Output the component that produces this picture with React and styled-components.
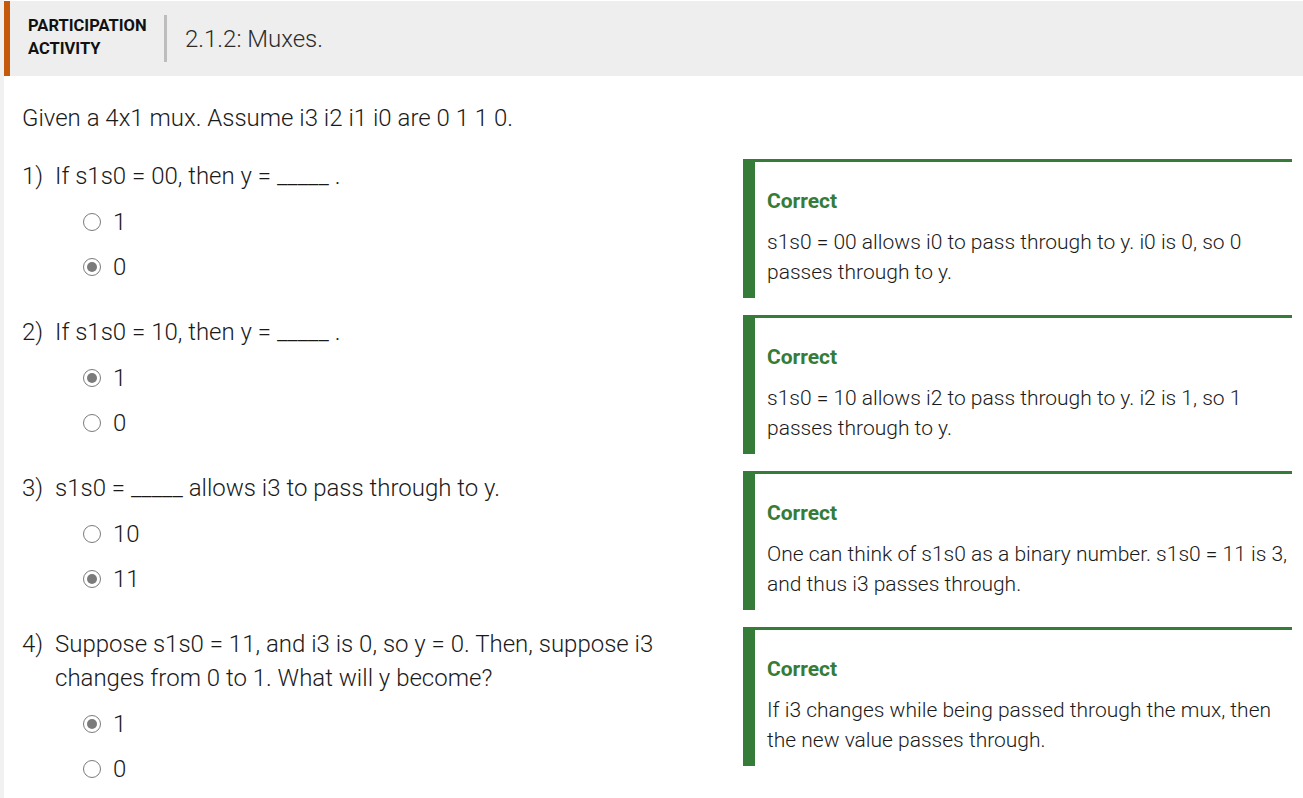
import React from "react";
import styled, { createGlobalStyle } from "styled-components";

const GlobalStyle = createGlobalStyle`
  body {
    margin: 0;
    background: #ffffff;
    font-family: Roboto, "Liberation Sans", sans-serif;
    color: #1a1a1a;
  }
`;

const Page = styled.div`
  border-left: 4px solid #f1f1f1;
  min-height: 798px;
  box-sizing: border-box;
  padding-top: 1px;
`;

const Header = styled.header`
  display: flex;
  align-items: center;
  height: 75px;
  background: #eeeeee;
  border-left: 6px solid #c55a0c;
`;

const ActivityLabel = styled.div`
  width: 136px;
  padding: 0 0 4px 18px;
  font-size: 16.5px;
  font-weight: 700;
  line-height: 23px;
  color: #111;
`;

const Divider = styled.div`
  width: 3px;
  height: 47px;
  background: #bdbdbd;
  margin-right: 18px;
`;

const Title = styled.h1`
  margin: 0;
  font-size: 24px;
  font-weight: 300;
  color: #2b2b2b;
  padding-top: 1px;
`;

const Body = styled.div`
  padding: 25px 11px 0 18px;
`;

const Intro = styled.p`
  margin: 0 0 24px;
  font-size: 24px;
  font-weight: 300;
  line-height: 34px;
`;

const QuestionRow = styled.div`
  display: flex;
  align-items: flex-start;
  margin-bottom: 17px;
`;

const QuestionSide = styled.div`
  flex: 1;
  display: flex;
  align-items: flex-start;
`;

const Number = styled.span`
  width: 33px;
  flex-shrink: 0;
  font-size: 24px;
  font-weight: 300;
  line-height: 34px;
`;

const QuestionBody = styled.div`
  flex: 1;
`;

const Prompt = styled.div`
  font-size: 24px;
  font-weight: 300;
  line-height: 34px;
  max-width: 630px;
`;

const Options = styled.div`
  padding: 6px 0 0 28px;
`;

const Option = styled.label`
  display: flex;
  align-items: center;
  height: 45px;
  font-size: 24px;
  font-weight: 300;
`;

const Radio = styled.span`
  width: 18px;
  height: 18px;
  box-sizing: border-box;
  border-radius: 50%;
  border: 1.5px solid #7b7b7b;
  margin-right: 12px;
  display: flex;
  align-items: center;
  justify-content: center;
  &::after {
    content: "";
    width: 10px;
    height: 10px;
    border-radius: 50%;
    background: ${(props) => (props.checked ? "#7b7b7b" : "transparent")};
  }
`;

const Feedback = styled.div`
  width: 549px;
  height: 139px;
  flex-shrink: 0;
  box-sizing: border-box;
  border-left: 12px solid #367c39;
  border-top: 3px solid #367c39;
  padding: 24px 0 0 12px;
`;

const FeedbackTitle = styled.div`
  font-size: 21px;
  font-weight: 700;
  line-height: 30px;
  color: #367c39;
  margin-bottom: 11px;
`;

const FeedbackText = styled.div`
  font-size: 21px;
  font-weight: 300;
  line-height: 30px;
`;

const questions = [
  {
    prompt: "If s1s0 = 00, then y = _____ .",
    options: [
      { label: "1", checked: false },
      { label: "0", checked: true },
    ],
    feedback: "s1s0 = 00 allows i0 to pass through to y. i0 is 0, so 0 passes through to y.",
  },
  {
    prompt: "If s1s0 = 10, then y = _____ .",
    options: [
      { label: "1", checked: true },
      { label: "0", checked: false },
    ],
    feedback: "s1s0 = 10 allows i2 to pass through to y. i2 is 1, so 1 passes through to y.",
  },
  {
    prompt: "s1s0 = _____ allows i3 to pass through to y.",
    options: [
      { label: "10", checked: false },
      { label: "11", checked: true },
    ],
    feedback: "One can think of s1s0 as a binary number. s1s0 = 11 is 3, and thus i3 passes through.",
  },
  {
    prompt: "Suppose s1s0 = 11, and i3 is 0, so y = 0. Then, suppose i3 changes from 0 to 1. What will y become?",
    options: [
      { label: "1", checked: true },
      { label: "0", checked: false },
    ],
    feedback: "If i3 changes while being passed through the mux, then the new value passes through.",
  },
];

export default function App() {
  return (
    <Page>
      <GlobalStyle />
      <Header>
        <ActivityLabel>
          PARTICIPATION
          <br />
          ACTIVITY
        </ActivityLabel>
        <Divider />
        <Title>2.1.2: Muxes.</Title>
      </Header>
      <Body>
        <Intro>Given a 4x1 mux. Assume i3 i2 i1 i0 are 0 1 1 0.</Intro>
        {questions.map((q, i) => (
          <QuestionRow key={i}>
            <QuestionSide>
              <Number>{i + 1})</Number>
              <QuestionBody>
                <Prompt>{q.prompt}</Prompt>
                <Options>
                  {q.options.map((o) => (
                    <Option key={o.label}>
                      <Radio checked={o.checked} />
                      {o.label}
                    </Option>
                  ))}
                </Options>
              </QuestionBody>
            </QuestionSide>
            <Feedback>
              <FeedbackTitle>Correct</FeedbackTitle>
              <FeedbackText>{q.feedback}</FeedbackText>
            </Feedback>
          </QuestionRow>
        ))}
      </Body>
    </Page>
  );
}
